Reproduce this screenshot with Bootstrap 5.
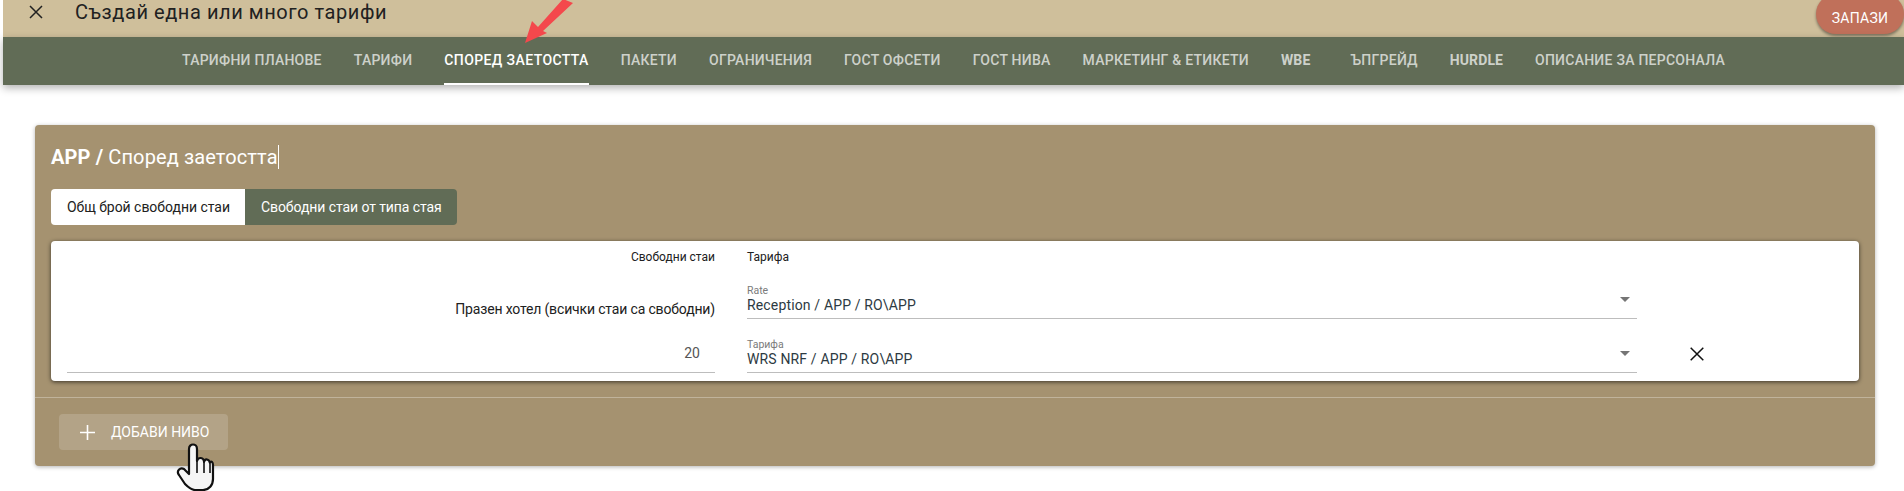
<!DOCTYPE html>
<html lang="bg">
<head>
<meta charset="utf-8">
<title>Тарифи</title>
<link href="https://cdn.jsdelivr.net/npm/bootstrap@5.3.0/dist/css/bootstrap.min.css" rel="stylesheet">
<style>
html,body{height:491px;overflow:hidden;background:#fff;font-family:Roboto,"Liberation Sans",sans-serif;color:#212121}
.stage{position:relative;height:491px;overflow:hidden;padding-left:3px}
.topbar{height:37px;background:#cfbf9b;padding-left:25px}
.close-x{width:14px;height:14px;margin-top:-13px;margin-left:1px}
.page-title{font-size:20px;line-height:24px;margin-left:32px;color:#212121;margin-top:-13px;letter-spacing:.57px}
.save-btn{background:#c0705a;color:#fff;font-size:14px;font-weight:400;border:0;border-radius:20px;height:40px;width:88px;margin-top:-10px;padding:8px 0 0;box-shadow:0 2px 3px rgba(0,0,0,.4);letter-spacing:.3px;line-height:16px}
.tabbar{height:48px;background:#616c56;box-shadow:0 3px 8px rgba(0,0,0,.3);position:relative;padding-left:163px}
.tab-item{margin:0 16px;height:48px;line-height:46px;font-size:14px;font-weight:500;color:rgba(255,255,255,.7);position:relative;white-space:nowrap;letter-spacing:.25px}
.tab-item.on{color:#fff;border-bottom:2px solid #fff;letter-spacing:.4px}
.tab-item.strong{font-weight:700;font-size:14px;letter-spacing:.1px}
.tab-item.wide-end{margin-right:24px}
.panel-box{margin:40px 29px 0 32px;height:341px;background:#a59270;border-radius:4px;box-shadow:0 1px 4px rgba(0,0,0,.3);color:#fff}
.panel-top{padding:20px 16px 0;height:272px}
.panel-title{font-size:20px;line-height:24px;height:24px;letter-spacing:.12px}
.caret-line{display:inline-block;width:1px;height:24px;background:#fff;vertical-align:top}
.seg-wrap{margin-top:20px;height:36px}
.seg{height:36px;line-height:36px;padding:0 16px;font-size:14px;white-space:nowrap;letter-spacing:-.03px}
.seg.plain{background:#fff;color:#212121;border-radius:4px 0 0 4px;width:194px}
.seg.act{background:#616c56;color:#fff;border-radius:0 4px 4px 0;width:212px;letter-spacing:-.08px}
.inner-box{margin-top:16px;height:140px;width:1808px;background:#fff;border-radius:4px;box-shadow:0 1px 4px rgba(0,0,0,.65);padding:0 16px;color:#212121;position:relative}
.cell-left{width:648px;margin-right:32px;text-align:right}
.cell-sel{width:890px;position:relative;border-bottom:1px solid #bdbdbd}
.head-row{height:32px;font-size:12px;line-height:32px}
.row-a{height:46px}
.row-a .cell-left{font-size:14px;line-height:20px;padding-top:26px;letter-spacing:-.16px}
.row-b{height:54px}
.row-b .cell-left{border-bottom:1px solid #bdbdbd;font-size:14px;line-height:20px;padding:24px 15px 0 0;height:54px;color:#555}
.sel-a{height:46px}
.sel-b{height:54px}
.cell-sel small{display:block;font-size:10.5px;line-height:12px;color:#7a7a7a}
.sel-val{font-size:14px;line-height:16px;letter-spacing:.15px;color:#2d3a42}
.sel-a .inset{padding-top:12px}
.sel-b .inset{padding-top:20px}
.drop{position:absolute;right:7px;width:0;height:0;border-left:5px solid transparent;border-right:5px solid transparent;border-top:5px solid #757575}
.sel-a .drop{top:24px}
.sel-b .drop{top:32px}
.del-x{position:absolute;left:1639px;top:106px;width:14px;height:14px}
.rule{height:1px;background:rgba(255,255,255,.3)}
.panel-foot{padding:16px 0 0 24px}
.add-btn{width:169px;height:36px;background:rgba(255,255,255,.16);color:#fff;border-radius:4px;font-size:14px;border:0;padding:0 0 0 21px}
.add-btn svg{width:15px;height:15px;margin-right:16px}
.over-mark{position:absolute;pointer-events:none}
</style>
</head>
<body>
<div class="stage">
  <header class="topbar d-flex align-items-center">
    <svg class="close-x" viewBox="0 0 14 14"><path d="M1 1L13 13M13 1L1 13" stroke="#212121" stroke-width="1.5" fill="none"/></svg>
    <div class="page-title">Създай една или много тарифи</div>
    <button class="save-btn ms-auto" type="button">ЗАПАЗИ</button>
  </header>
  <nav class="tabbar d-flex">
    <div class="tab-item">ТАРИФНИ ПЛАНОВЕ</div>
    <div class="tab-item">ТАРИФИ</div>
    <div class="tab-item on">СПОРЕД ЗАЕТОСТТА</div>
    <div class="tab-item">ПАКЕТИ</div>
    <div class="tab-item">ОГРАНИЧЕНИЯ</div>
    <div class="tab-item">ГОСТ ОФСЕТИ</div>
    <div class="tab-item">ГОСТ НИВА</div>
    <div class="tab-item">МАРКЕТИНГ &amp; ЕТИКЕТИ</div>
    <div class="tab-item strong wide-end">WBE</div>
    <div class="tab-item">ЪПГРЕЙД</div>
    <div class="tab-item strong">HURDLE</div>
    <div class="tab-item">ОПИСАНИЕ ЗА ПЕРСОНАЛА</div>
  </nav>
  <main class="panel-box">
    <div class="panel-top">
      <div class="panel-title"><strong class="fw-bold">APP /</strong> Според заетостта<span class="caret-line"></span></div>
      <div class="seg-wrap d-flex">
        <div class="seg plain">Общ брой свободни стаи</div>
        <div class="seg act">Свободни стаи от типа стая</div>
      </div>
      <div class="inner-box">
        <div class="head-row d-flex">
          <div class="cell-left">Свободни стаи</div>
          <div>Тарифа</div>
        </div>
        <div class="row-a d-flex">
          <div class="cell-left">Празен хотел (всички стаи са свободни)</div>
          <div class="cell-sel sel-a"><div class="inset"><small>Rate</small><div class="sel-val">Reception / APP / RO\APP</div></div><span class="drop"></span></div>
        </div>
        <div class="row-b d-flex">
          <div class="cell-left">20</div>
          <div class="cell-sel sel-b"><div class="inset"><small>Тарифа</small><div class="sel-val">WRS NRF / APP / RO\APP</div></div><span class="drop"></span></div>
        </div>
        <svg class="del-x" viewBox="0 0 14 14"><path d="M.7.7L13.3 13.3M13.3.7L.7 13.3" stroke="#111" stroke-width="1.5" fill="none"/></svg>
      </div>
    </div>
    <div class="rule"></div>
    <div class="panel-foot">
      <button class="add-btn d-flex align-items-center" type="button"><svg viewBox="0 0 15 15"><path d="M7.5 0V15M0 7.5H15" stroke="#fff" stroke-width="1.6" fill="none"/></svg>ДОБАВИ НИВО</button>
    </div>
  </main>
  <svg class="over-mark" style="left:520px;top:0" width="60" height="46" viewBox="0 0 60 46"><path d="M5 43L12 21L18 27L43 -1L53 3L23 31L27 33Z" fill="#f4484c"/></svg>
  <svg class="over-mark" style="left:176px;top:443px" width="40" height="48" viewBox="0 0 40 48"><path d="M13 6C13 0 21 0 21 6V18C22 14 27 14 28 18V19C29 15 33 16 34 20C35 17 37 19 37 22V36C37 42 33 47 27 47H19C15 47 12 44 9 41L3 32C0 28 4 24 8 26L13 31Z" fill="#f6f6f6" stroke="#111" stroke-width="2.2" stroke-linejoin="round"/><path d="M21 18V30M28 19V30M34 21V30" stroke="#111" stroke-width="1.6"/></svg>
</div>
<script src="https://cdn.jsdelivr.net/npm/bootstrap@5.3.0/dist/js/bootstrap.bundle.min.js"></script>
</body>
</html>
